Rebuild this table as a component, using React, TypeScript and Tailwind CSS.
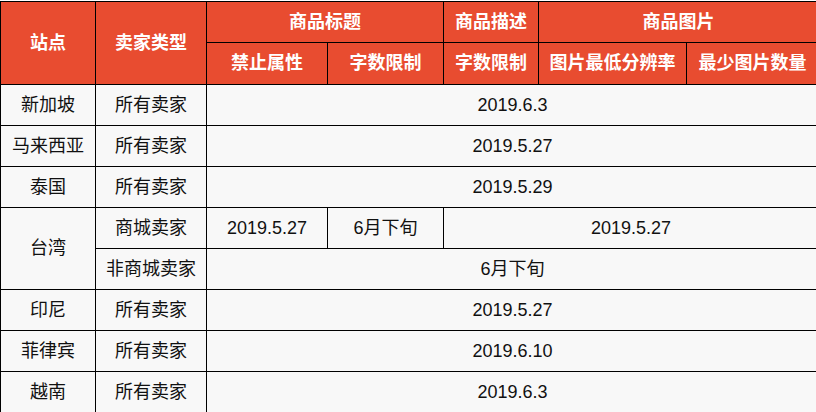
const FONT = "font-['Liberation_Sans','Noto_Sans_CJK_SC',sans-serif]";

const th = "border border-black bg-[#e84c30] text-white font-bold text-[18px] text-center p-0";
const td = "border border-black text-[#111] text-[18px] text-center p-0";

const ROWS: { site: string; type: string; date: string }[] = [
  { site: "新加坡", type: "所有卖家", date: "2019.6.3" },
  { site: "马来西亚", type: "所有卖家", date: "2019.5.27" },
  { site: "泰国", type: "所有卖家", date: "2019.5.29" },
];

const ROWS_AFTER: { site: string; type: string; date: string }[] = [
  { site: "印尼", type: "所有卖家", date: "2019.5.27" },
  { site: "菲律宾", type: "所有卖家", date: "2019.6.10" },
  { site: "越南", type: "所有卖家", date: "2019.6.3" },
];

export default function App() {
  return (
    <div className={`w-[816px] h-[412px] overflow-hidden bg-white ${FONT}`}>
      <table className="mt-px table-fixed border-collapse w-[818px] bg-[#f8f8f8]">
        <colgroup>
          <col className="w-[95px]" />
          <col className="w-[111px]" />
          <col className="w-[121px]" />
          <col className="w-[116px]" />
          <col className="w-[95px]" />
          <col className="w-[148px]" />
          <col className="w-[132px]" />
        </colgroup>
        <thead>
          <tr className="h-[41px]">
            <th rowSpan={2} className={th}>站点</th>
            <th rowSpan={2} className={th}>卖家类型</th>
            <th colSpan={2} className={th}>商品标题</th>
            <th className={th}>商品描述</th>
            <th colSpan={2} className={th}>商品图片</th>
          </tr>
          <tr className="h-[42px]">
            <th className={th}>禁止属性</th>
            <th className={th}>字数限制</th>
            <th className={th}>字数限制</th>
            <th className={th}>图片最低分辨率</th>
            <th className={th}>最少图片数量</th>
          </tr>
        </thead>
        <tbody>
          {ROWS.map((r) => (
            <tr key={r.site} className="h-[41px]">
              <td className={td}>{r.site}</td>
              <td className={td}>{r.type}</td>
              <td colSpan={5} className={td}>{r.date}</td>
            </tr>
          ))}
          <tr className="h-[41px]">
            <td rowSpan={2} className={td}>台湾</td>
            <td className={td}>商城卖家</td>
            <td className={td}>2019.5.27</td>
            <td className={td}>6月下旬</td>
            <td colSpan={3} className={td}>2019.5.27</td>
          </tr>
          <tr className="h-[41px]">
            <td className={td}>非商城卖家</td>
            <td colSpan={5} className={td}>6月下旬</td>
          </tr>
          {ROWS_AFTER.map((r) => (
            <tr key={r.site} className="h-[41px]">
              <td className={td}>{r.site}</td>
              <td className={td}>{r.type}</td>
              <td colSpan={5} className={td}>{r.date}</td>
            </tr>
          ))}
        </tbody>
      </table>
    </div>
  );
}
